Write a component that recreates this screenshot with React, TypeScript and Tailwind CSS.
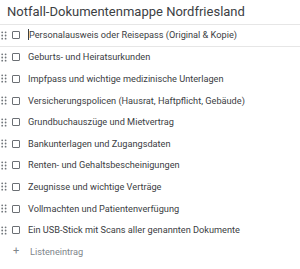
const items = [
  "Personalausweis oder Reisepass (Original & Kopie)",
  "Geburts- und Heiratsurkunden",
  "Impfpass und wichtige medizinische Unterlagen",
  "Versicherungspolicen (Hausrat, Haftpflicht, Gebäude)",
  "Grundbuchauszüge und Mietvertrag",
  "Bankunterlagen und Zugangsdaten",
  "Renten- und Gehaltsbescheinigungen",
  "Zeugnisse und wichtige Verträge",
  "Vollmachten und Patientenverfügung",
  "Ein USB-Stick mit Scans aller genannten Dokumente",
];

function DragHandle() {
  return (
    <svg width="6" height="9" viewBox="0 0 6 9" className="shrink-0 text-[#70757a]">
      {[0, 1].map((c) =>
        [0, 1, 2].map((r) => (
          <circle key={`${c}-${r}`} cx={1.2 + c * 3.4} cy={1.3 + r * 3.2} r="0.9" fill="currentColor" />
        ))
      )}
    </svg>
  );
}

export default function App() {
  return (
    <div className="h-[269px] w-[300px] overflow-hidden bg-white font-['Roboto',sans-serif]">
      <div className="flex h-[25px] items-center border-b border-[#e6e6e6] pl-[7px] text-[13px] text-[#3c4043]">
        Notfall-Dokumentenmappe Nordfriesland
      </div>
      {items.map((item, i) => (
        <div
          key={item}
          className={`flex h-[21.6px] items-center pl-[1px] ${i === 0 ? "border-b border-[#e6e6e6]" : ""}`}
        >
          <DragHandle />
          <span className="ml-[5px] h-[8px] w-[8px] shrink-0 rounded-[1px] border border-[#6b6f74]" />
          <span className="ml-[8px] whitespace-nowrap text-[9.2px] text-[#3c4043]">
            {i === 0 ? <span className="border-l border-[#3c4043]" /> : null}
            {item}
          </span>
        </div>
      ))}
      <div className="flex h-[21px] items-center pl-[13px] text-[#80868b]">
        <span className="w-[17px] text-[11px]">+</span>
        <span className="text-[9.2px]">Listeneintrag</span>
      </div>
    </div>
  );
}
